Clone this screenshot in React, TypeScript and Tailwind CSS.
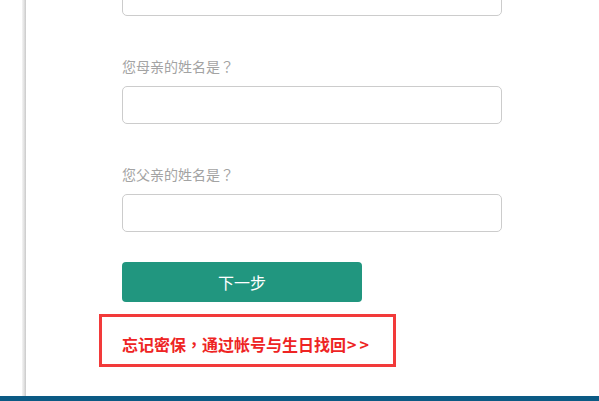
import React from "react"

const cjk = "font-['Microsoft_YaHei','Noto_Sans_CJK_SC',sans-serif]"
// centred full-width punctuation, as in the original font
const punct = "font-['Noto_Sans_CJK_TC',sans-serif]"

export default function App() {
  return (
    <div className={`relative flex h-[401px] w-full flex-col overflow-hidden bg-white ${cjk}`}>
      <div className="flex flex-1 overflow-hidden">
        {/* left gutter + divider */}
        <div className="w-[22px] shrink-0" />
        <div className="w-[4px] shrink-0 bg-gradient-to-r from-[#f4f4f4] via-[#e2e2e2] to-[#c9c9c9]" />

        <div className="flex flex-col pl-[96px]">
          <div className="-mt-[22px] h-[38px] w-[380px] rounded-[5px] border border-[#cccccc]" />

          <div className="mt-[40px] h-[20px] text-[14px] leading-[20px] text-[#a3a3a3]">
            您母亲的姓名是<span className={punct}>？</span>
          </div>
          <div className="mt-[10px] h-[38px] w-[380px] rounded-[5px] border border-[#cccccc]" />

          <div className="mt-[40px] h-[20px] text-[14px] leading-[20px] text-[#a3a3a3]">
            您父亲的姓名是<span className={punct}>？</span>
          </div>
          <div className="mt-[10px] h-[38px] w-[380px] rounded-[5px] border border-[#cccccc]" />

          <button className="mt-[30px] flex h-[40px] w-[240px] items-center justify-center rounded-[4px] bg-[#21967f] text-[16px] text-white">
            下一步
          </button>

          <div className="-ml-[23px] mt-[12px] h-[53px] w-[297px] border-[3px] border-[#f23a3a] pl-[20px] pt-[15px]">
            <span className="text-[16px] font-bold leading-[24px] text-[#ee2424]">
              忘记密保<span className={punct}>，</span>通过帐号与生日找回<span className="ml-[1px] tracking-[3px]">&gt;&gt;</span>
            </span>
          </div>
        </div>
      </div>
      <div className="h-[5px] w-full shrink-0 bg-[#0b5a84]" />
    </div>
  )
}
